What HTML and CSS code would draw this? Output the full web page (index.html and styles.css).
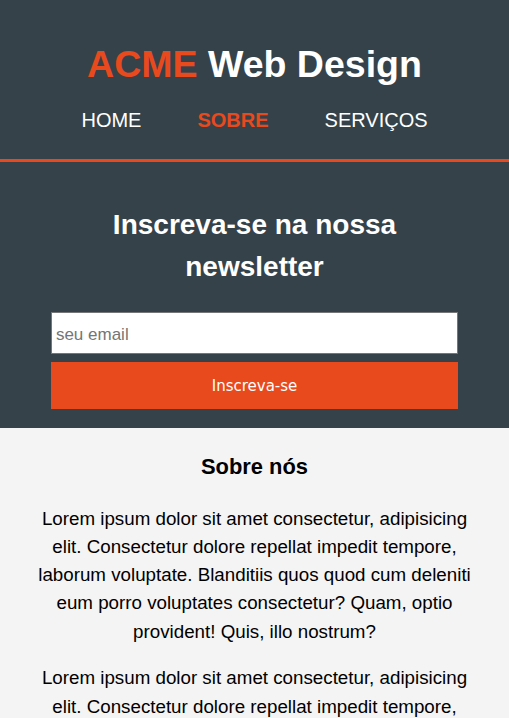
FILE: index.html
```html
<!DOCTYPE html>
<html lang="pt-BR">
<head>
<meta charset="utf-8">
<title>ACME Web Design | Sobre</title>
<link rel="stylesheet" href="styles.css">
</head>
<body>
<header class="site-header">
  <h1 class="brand"><span class="highlight">ACME</span> Web Design</h1>
  <nav>
    <ul class="nav-list">
      <li><a class="nav-link" href="#">Home</a></li>
      <li><a class="nav-link current" href="#">Sobre</a></li>
      <li><a class="nav-link" href="#">Serviços</a></li>
    </ul>
  </nav>
</header>
<section class="newsletter">
  <div class="container">
    <h2 class="newsletter-title">Inscreva-se na nossa newsletter</h2>
    <form class="newsletter-form">
      <input class="email-input" type="email" placeholder="seu email">
      <button class="subscribe-btn" type="button">Inscreva-se</button>
    </form>
  </div>
</section>
<main class="main">
  <h3 class="main-title">Sobre nós</h3>
  <p class="text">Lorem ipsum dolor sit amet consectetur, adipisicing elit. Consectetur dolore repellat impedit tempore, laborum voluptate. Blanditiis quos quod cum deleniti eum porro voluptates consectetur? Quam, optio provident! Quis, illo nostrum?</p>
  <p class="text">Lorem ipsum dolor sit amet consectetur, adipisicing elit. Consectetur dolore repellat impedit tempore, laborum voluptate. Blanditiis quos quod cum deleniti eum porro voluptates consectetur? Quam, optio provident! Quis, illo nostrum?</p>
</main>
</body>
</html>
```
FILE: styles.css
```css
* { box-sizing: border-box; }

html, body {
  margin: 0;
  padding: 0;
}

body {
  font-family: "Liberation Sans", Arial, sans-serif;
  font-size: 18.75px;
  line-height: 1.5;
  background: #f4f4f4;
  color: #000;
}

.site-header {
  background: #35424a;
  color: #fff;
  padding: 36px 0 24px;
  border-bottom: 3px solid #e8491d;
  text-align: center;
}

.brand {
  margin: 0;
  font-size: 37.5px;
  line-height: 56px;
  font-weight: bold;
}

.highlight { color: #e8491d; }

.nav-list {
  list-style: none;
  margin: 13px 0 0;
  padding: 0;
  display: flex;
  justify-content: center;
  gap: 56px;
}

.nav-link {
  color: #fff;
  text-decoration: none;
  text-transform: uppercase;
  font-size: 20px;
  line-height: 30px;
  display: block;
}

.nav-link.current {
  color: #e8491d;
  font-weight: bold;
}

.newsletter {
  background: #35424a;
  color: #fff;
  padding: 19px 0;
}

.container {
  width: 80%;
  margin: 0 auto;
}

.newsletter-title {
  margin: 23px 0 24px;
  font-size: 28px;
  line-height: 42px;
  text-align: center;
  font-weight: bold;
}

.newsletter-form {
  display: flex;
  flex-direction: column;
  gap: 8px;
}

.email-input {
  display: block;
  width: 100%;
  height: 42px;
  padding: 4px 4px 0;
  border: 1px solid #767676;
  font-family: "Liberation Sans", Arial, sans-serif;
  font-size: 17px;
  color: #000;
  background: #fff;
  margin: 0;
}

.email-input::placeholder { color: #757575; }

.subscribe-btn {
  display: block;
  width: 100%;
  height: 47px;
  border: 0;
  background: #e8491d;
  color: #fff;
  font-family: "DejaVu Sans", sans-serif;
  font-size: 15px;
  margin: 0;
  padding: 0 20px;
}

.main {
  padding: 0 31px;
  text-align: center;
}

.main-title {
  margin: 22px 0;
  font-size: 21.9px;
  line-height: 33px;
  font-weight: bold;
}

.text {
  margin: 18.75px 0;
  line-height: 28.125px;
}
```
